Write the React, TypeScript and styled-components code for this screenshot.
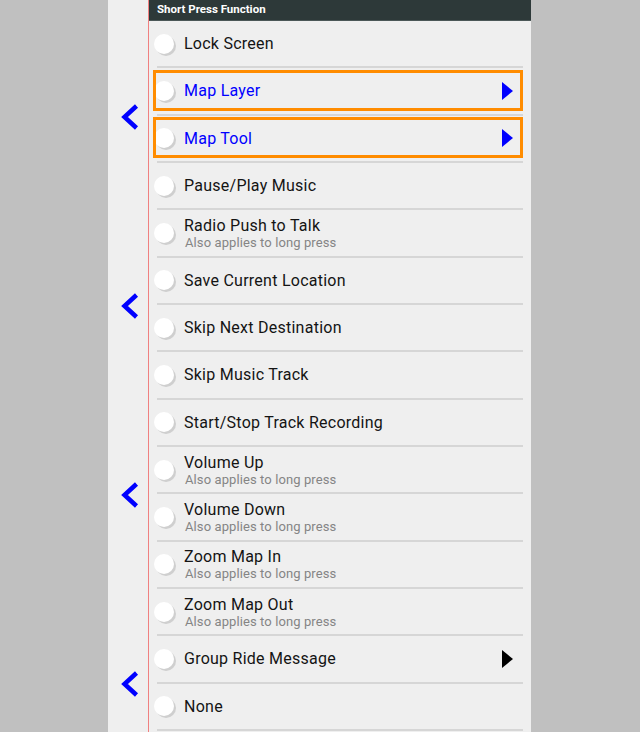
import React from "react";
import styled, { createGlobalStyle } from "styled-components";

type Item = {
    title: string;
    sub?: string;
    arrow?: "blue" | "black";
    active?: boolean;
};

const items: Item[] = [
    { title: "Lock Screen" },
    { title: "Map Layer", arrow: "blue", active: true },
    { title: "Map Tool", arrow: "blue", active: true },
    { title: "Pause/Play Music" },
    { title: "Radio Push to Talk", sub: "Also applies to long press" },
    { title: "Save Current Location" },
    { title: "Skip Next Destination" },
    { title: "Skip Music Track" },
    { title: "Start/Stop Track Recording" },
    { title: "Volume Up", sub: "Also applies to long press" },
    { title: "Volume Down", sub: "Also applies to long press" },
    { title: "Zoom Map In", sub: "Also applies to long press" },
    { title: "Zoom Map Out", sub: "Also applies to long press" },
    { title: "Group Ride Message", arrow: "black" },
    { title: "None" },
];

const Chevron = () => (
    <svg width="18" height="26" viewBox="0 0 18 26">
        <polyline points="15.5,2 3.5,13 15.5,24" fill="none" stroke="#0000ff" strokeWidth="4.5" />
    </svg>
);

export default function App() {
    return (
        <>
            <GlobalStyle />
            <Page>
                <Panel>
                    <Side>
                        <Chevron />
                        <Chevron />
                        <Chevron />
                        <Chevron />
                    </Side>
                    <Main>
                        <Header>Short Press Function</Header>
                        {items.map((it) => (
                            <Row key={it.title} $active={it.active}>
                                <Radio />
                                <Texts>
                                    <Title $blue={it.active}>{it.title}</Title>
                                    {it.sub && <Sub>{it.sub}</Sub>}
                                </Texts>
                                {it.arrow && <Arrow $color={it.arrow === "blue" ? "#0000ff" : "#000"} />}
                            </Row>
                        ))}
                    </Main>
                </Panel>
            </Page>
        </>
    );
}

const GlobalStyle = createGlobalStyle`
    body {
        margin: 0;
        background: #c0c0c0;
        font-family: Roboto, "Liberation Sans", sans-serif;
    }
`

const Page = styled.div`
    width: 640px;
    height: 732px;
    padding-left: 108px;
    box-sizing: border-box;
    overflow: hidden;
`

const Panel = styled.div`
    width: 423px;
    height: 732px;
    display: flex;
    background: #efefef;
`

const Side = styled.div`
    width: 41px;
    border-right: 1px solid #f08080;
    display: flex;
    flex-direction: column;
    align-items: flex-start;
    padding: 104px 0 0 13px;
    gap: 163px;
    box-sizing: border-box;
`

const Main = styled.div`
    flex: 1;
    display: flex;
    flex-direction: column;
`

const Header = styled.div`
    height: 20px;
    flex-shrink: 0;
    border-bottom: 1px solid #4b5757;
    background: #2d3939;
    color: #fff;
    font-size: 11.5px;
    font-weight: 700;
    line-height: 19px;
    padding-left: 8px;
`

const Row = styled.div<{ $active?: boolean }>`
    position: relative;
    height: 45.33px;
    flex-shrink: 0;
    display: flex;
    align-items: center;
    padding: 0 18px 0 5px;
    margin-bottom: 2px;

    &::before {
        content: "";
        position: absolute;
        left: 8px;
        right: 8px;
        bottom: -2px;
        height: 2px;
        background: #d6d6d6;
    }

    &::after {
        content: "";
        display: ${(p) => (p.$active ? "block" : "none")};
        position: absolute;
        left: 4px;
        right: 8px;
        top: 1.5px;
        bottom: 2.5px;
        border: 3px solid #ff8c00;
    }
`

const Radio = styled.span`
    width: 20px;
    height: 20px;
    border-radius: 50%;
    background: #fff;
    box-shadow: 2px 2px 0 0 #cfcfcf;
    flex-shrink: 0;
`

const Texts = styled.div`
    flex: 1;
    display: flex;
    flex-direction: column;
    padding-left: 10px;
`

const Title = styled.div<{ $blue?: boolean }>`
    font-size: 16px;
    line-height: 19px;
    letter-spacing: 0.25px;
    color: ${(p) => (p.$blue ? "#0000ff" : "#141414")};
`

const Sub = styled.div`
    font-size: 13px;
    line-height: 15px;
    letter-spacing: 0.1px;
    padding-left: 1px;
    color: #858585;
`

const Arrow = styled.span<{ $color: string }>`
    width: 0;
    height: 0;
    border-top: 9px solid transparent;
    border-bottom: 9px solid transparent;
    border-left: 11px solid ${(p) => p.$color};
`
